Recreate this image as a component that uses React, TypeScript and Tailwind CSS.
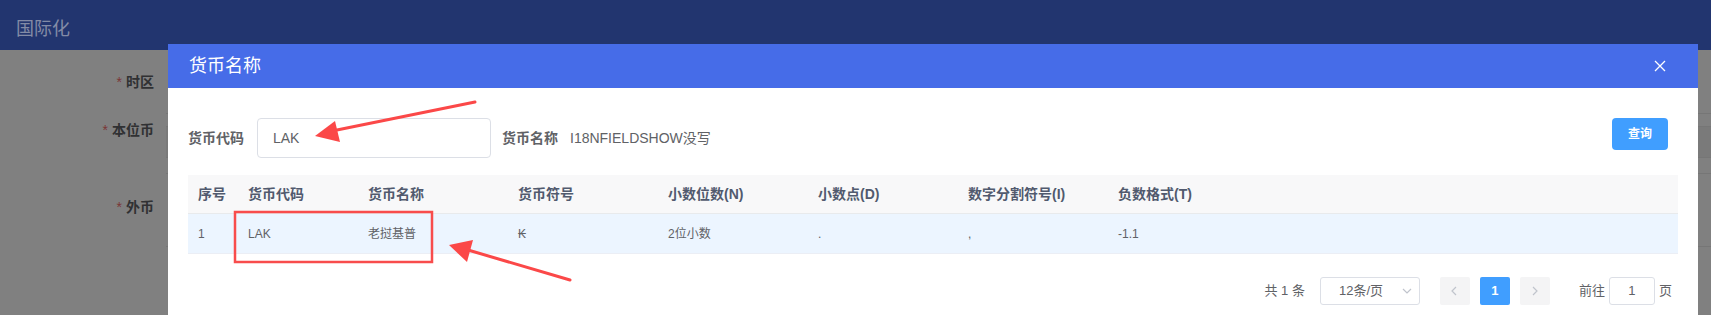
import React from 'react';

const font = "font-['Liberation_Sans','Noto_Sans_CJK_SC',sans-serif]";

const columns = [
  { title: '序号', width: 'w-[50px]' },
  { title: '货币代码', width: 'w-[120px]' },
  { title: '货币名称', width: 'w-[150px]' },
  { title: '货币符号', width: 'w-[150px]' },
  { title: '小数位数(N)', width: 'w-[150px]' },
  { title: '小数点(D)', width: 'w-[150px]' },
  { title: '数字分割符号(I)', width: 'w-[150px]' },
  { title: '负数格式(T)', width: 'flex-1' },
];

const row = ['1', 'LAK', '老挝基普', '₭', '2位小数', '.', ',', '-1.1'];

const BackgroundPage: React.FC = () => (
  <div className="flex flex-col h-full">
    <div className="h-[50px] shrink-0 bg-[#22356f] flex items-center pl-[16px] pt-[8px]">
      <span className="text-[18px] text-[#838ba6]">国际化</span>
    </div>
    <div className="flex flex-1">
      <div className="w-[154px] shrink-0 flex flex-col items-end text-[14px] font-bold text-[#303133]">
        <div className="mt-[23px] h-[18px] leading-[18px]"><span className="text-[#7b3636] mr-[4px] font-normal">*</span>时区</div>
        <div className="mt-[30px] h-[18px] leading-[18px]"><span className="text-[#7b3636] mr-[4px] font-normal">*</span>本位币</div>
        <div className="mt-[59px] h-[18px] leading-[18px]"><span className="text-[#7b3636] mr-[4px] font-normal">*</span>外币</div>
      </div>
      <div className="flex-1 flex flex-col ml-[12px]">
        <div className="mt-[63px] border-t border-[#767676]" />
        <div className="mt-[12px] h-[32px] bg-[#7a7a7a] border-y border-[#767676]" />
        <div className="mt-[15px] h-[74px] border-y border-[#767676]" />
      </div>
    </div>
  </div>
);

const Chevron: React.FC<{ dir: 'left' | 'right' | 'down'; className?: string }> = ({ dir, className }) => {
  const d = dir === 'left' ? 'M7 2 L3 6 L7 10' : dir === 'right' ? 'M4 2 L8 6 L4 10' : 'M2 4 L6 8 L10 4';
  return (
    <svg width="12" height="12" viewBox="0 0 12 12" className={className}>
      <path d={d} fill="none" stroke="currentColor" strokeWidth="1.2" />
    </svg>
  );
};

const Dialog: React.FC = () => (
  <div className="absolute left-[168px] top-[44px] w-[1530px] h-[300px] bg-white">
    <div className="h-[44px] bg-[#466ce8] flex items-center justify-between pl-[21px] pr-[32px]">
      <span className="text-[18px] text-white">货币名称</span>
      <svg width="12" height="12" viewBox="0 0 12 12" className="text-white">
        <path d="M1 1 L11 11 M11 1 L1 11" stroke="currentColor" strokeWidth="1.3" />
      </svg>
    </div>
    <div className="px-[20px] pt-[30px]">
      <div className="flex items-center h-[40px]">
        <span className="text-[14px] font-bold text-[#606266]">货币代码</span>
        <div className="ml-[13px] w-[234px] h-[40px] border border-[#dcdfe6] rounded-[4px] flex items-center pl-[15px] text-[14px] text-[#606266]">
          LAK
        </div>
        <span className="ml-[11px] text-[14px] font-bold text-[#606266]">货币名称</span>
        <span className="ml-[12px] text-[14px] text-[#606266]">I18NFIELDSHOW没写</span>
        <button className="self-start ml-auto mr-[10px] w-[56px] h-[32px] rounded-[4px] bg-[#409eff] text-white text-[12px] font-bold">
          查询
        </button>
      </div>
      <div className="mt-[17px]">
        <div className="flex h-[39px] bg-[#f8f8f9] border-b border-[#e8eaec] items-center">
          {columns.map((c) => (
            <div key={c.title} className={`${c.width} pl-[10px] text-[14px] font-bold text-[#515a6e] whitespace-nowrap`}>
              {c.title}
            </div>
          ))}
        </div>
        <div className="flex h-[40px] bg-[#ecf5ff] border-b border-[#ebeef5] items-center">
          {columns.map((c, i) => (
            <div key={c.title} className={`${c.width} pl-[10px] text-[12px] text-[#606266] whitespace-nowrap`}>
              {row[i]}
            </div>
          ))}
        </div>
      </div>
      <div className="mt-[23px] flex items-center justify-end pr-[6px] text-[13px] text-[#606266] h-[28px]">
        <span>共 1 条</span>
        <div className="ml-[15px] w-[100px] h-[28px] border border-[#dcdfe6] rounded-[3px] flex items-center pl-[18px] pr-[6px]">
          <span className="flex-1">12条/页</span>
          <Chevron dir="down" className="text-[#c0c4cc]" />
        </div>
        <div className="ml-[20px] w-[30px] h-[28px] bg-[#f4f4f5] rounded-[2px] flex items-center justify-center">
          <Chevron dir="left" className="text-[#c0c4cc]" />
        </div>
        <div className="ml-[10px] w-[30px] h-[28px] bg-[#409eff] rounded-[2px] flex items-center justify-center text-white font-bold">
          1
        </div>
        <div className="ml-[10px] w-[30px] h-[28px] bg-[#f4f4f5] rounded-[2px] flex items-center justify-center">
          <Chevron dir="right" className="text-[#c0c4cc]" />
        </div>
        <span className="ml-[29px]">前往</span>
        <div className="ml-[4px] w-[46px] h-[28px] border border-[#dcdfe6] rounded-[3px] flex items-center justify-center">
          1
        </div>
        <span className="ml-[4px]">页</span>
      </div>
    </div>
  </div>
);

const Annotations: React.FC = () => (
  <svg className="absolute inset-0 pointer-events-none" width="1711" height="315" viewBox="0 0 1711 315">
    <line x1="475" y1="102" x2="332" y2="131" stroke="#fb4848" strokeWidth="3" strokeLinecap="round" />
    <polygon points="315,136 335,121 340,142" fill="#fb4848" />
    <rect x="235" y="212" width="197" height="50" fill="none" stroke="#f84c4c" strokeWidth="2.5" />
    <line x1="570" y1="280" x2="468" y2="250" stroke="#fb4848" strokeWidth="3" strokeLinecap="round" />
    <polygon points="449,245 473,240 467,262" fill="#fb4848" />
  </svg>
);

export default function App() {
  return (
    <div className={`relative w-[1711px] h-[315px] overflow-hidden bg-[#808080] ${font}`}>
      <BackgroundPage />
      <Dialog />
      <Annotations />
    </div>
  );
}
